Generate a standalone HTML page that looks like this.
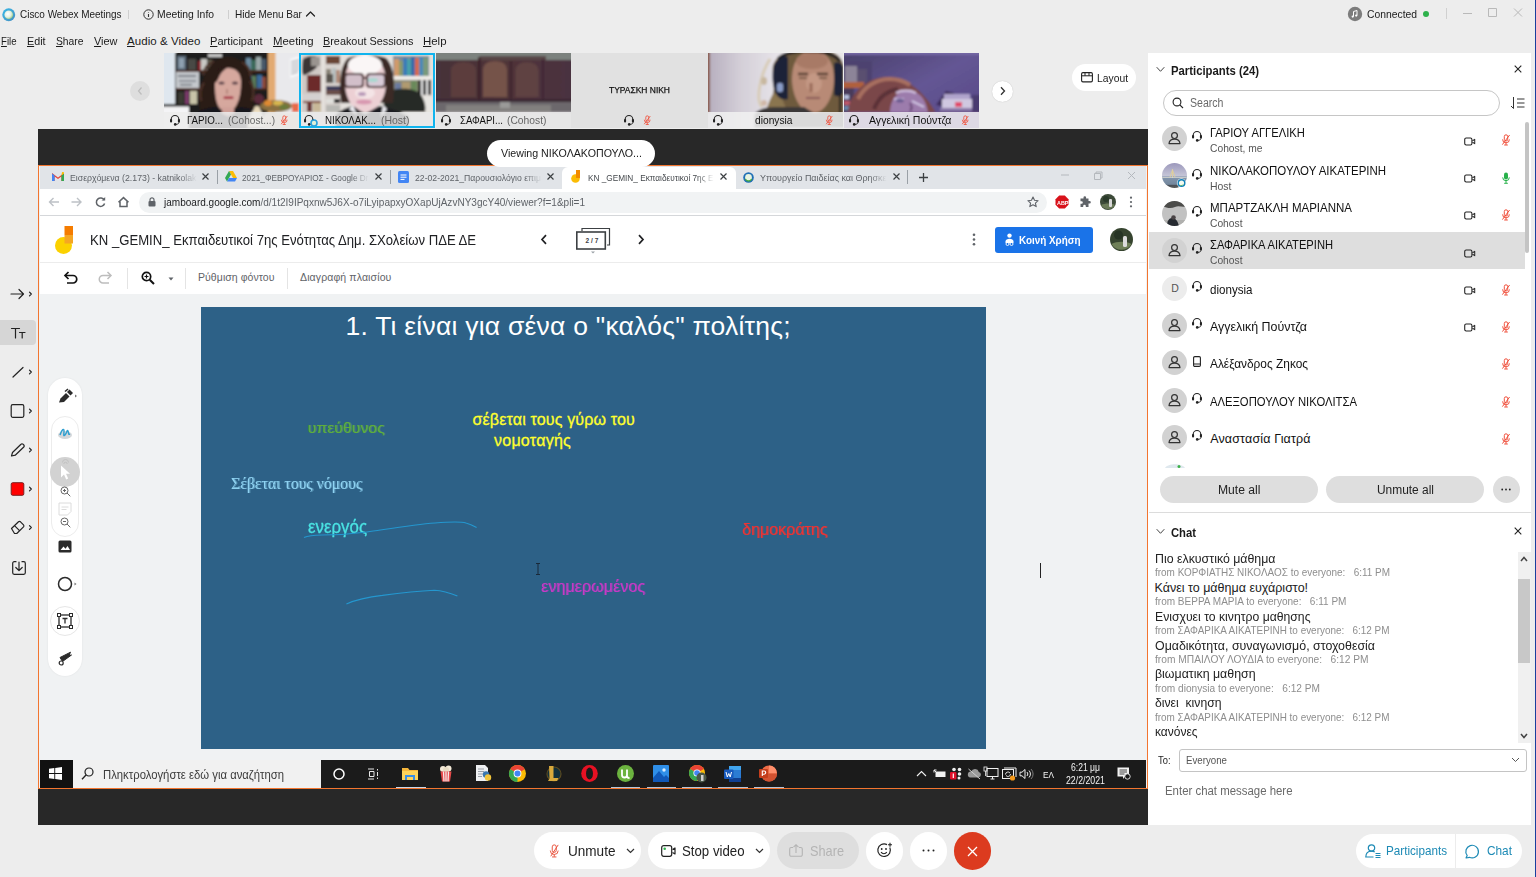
<!DOCTYPE html>
<html lang="el"><head>
<meta charset="utf-8">
<title>Cisco Webex Meetings</title>
<style>
*{box-sizing:border-box;margin:0;padding:0}
html,body{width:1536px;height:877px;overflow:hidden}
body{background:#ededed;font-family:"Liberation Sans",sans-serif;color:#222;font-size:12px}
.a{position:absolute;white-space:nowrap}
.t{position:absolute;white-space:pre;line-height:1;color:#1b1b1b}
svg{position:absolute;overflow:visible}
.ic{fill:none;stroke:#222;stroke-width:1.2;stroke-linecap:round;stroke-linejoin:round}
u{text-decoration-thickness:1px}
.g{color:#666}
.vid{position:absolute;top:53px;height:75px;overflow:hidden}
.vid svg{left:0;top:0}
.lab{position:absolute;left:0;right:0;top:59px;height:16px;background:rgba(236,236,236,.86)}
.sep{position:absolute;width:1px;background:#cfcfcf}
</style>
</head>
<body>

<!-- ================= TITLE BAR ================= -->
<div id="titlebar">
  <svg style="left:2px;top:7.500px" width="13.500" height="13.500" viewBox="0 0 14.600 14.600"><defs><linearGradient id="wx" x1="0" y1="0" x2="1" y2="1"><stop offset="0" stop-color="#35b8e8"></stop><stop offset="1" stop-color="#4a8fc0"></stop></linearGradient><radialGradient id="wx2" cx=".4" cy=".4" r=".7"><stop offset="0" stop-color="#fff"></stop><stop offset=".55" stop-color="#e4efe0"></stop><stop offset="1" stop-color="#7fc26a"></stop></radialGradient></defs><circle cx="7.3" cy="7.3" r="7" fill="url(#wx)"></circle><circle cx="7.3" cy="7.3" r="4.7" fill="url(#wx2)"></circle></svg>
  <span class="t" style="font-size: 11.5px; left: 20px; top: 9px; transform-origin: 0px 50%; transform: scaleX(0.865);">Cisco Webex Meetings</span>
  <div class="sep" style="left:128px;top:10px;height:9px"></div>
  <svg style="left:143px;top:9px" width="11" height="11" viewBox="0 0 11 11"><circle cx="5.5" cy="5.5" r="4.7" fill="none" stroke="#333" stroke-width="1"></circle><path d="M5.5 5v3M5.5 3v.6" stroke="#333" stroke-width="1.1" fill="none"></path></svg>
  <span class="t" style="font-size: 11.5px; left: 157px; top: 9px; transform-origin: 0px 50%; transform: scaleX(0.901);">Meeting Info</span>
  <div class="sep" style="left:228px;top:10px;height:9px"></div>
  <span class="t" style="font-size: 11.5px; left: 235px; top: 9px; transform-origin: 0px 50%; transform: scaleX(0.873);">Hide Menu Bar</span>
  <svg style="left:305px;top:10px" width="11" height="8" viewBox="0 0 11 8"><path class="ic" d="M1.5 6 5.5 2l4 4" stroke-width="1.1"></path></svg>

  <svg style="left:1347px;top:6px" width="16" height="16" viewBox="0 0 16 16"><circle cx="8" cy="8" r="7.2" fill="#7d7d7d"></circle><path d="M6.5 10.5V5.5l3.5-1v5" fill="none" stroke="#fff" stroke-width="1"></path><circle cx="5.7" cy="10.6" r="1.1" fill="#fff"></circle><circle cx="9.2" cy="9.6" r="1.1" fill="#fff"></circle></svg>
  <span class="t" style="font-size: 11.5px; left: 1367px; top: 9px; transform-origin: 0px 50%; transform: scaleX(0.899);">Connected</span>
  <div class="a" style="left:1423px;top:11px;width:6px;height:6px;border-radius:50%;background:#2fb24c"></div>
  <div class="sep" style="left:1446px;top:8px;height:11px;background:#d0d0d0"></div>
  <svg style="left:1462px;top:7px" width="66" height="14" viewBox="0 0 66 14"><path d="M1 6.5h9M26.5 1.5h8v8h-8zM52 1.5l8 8M60 1.5l-8 8" fill="none" stroke="#b9b9b9" stroke-width="1"></path></svg>
</div>

<!-- ================= MENU BAR ================= -->
<div id="menubar">
  <span class="t" style="font-size: 11.5px; left: 1px; top: 35.5px; transform-origin: 0px 50%; transform: scaleX(0.836);"><u>F</u>ile</span>
  <span class="t" style="font-size: 11.5px; left: 27px; top: 35.5px; transform-origin: 0px 50%; transform: scaleX(0.933);"><u>E</u>dit</span>
  <span class="t" style="font-size: 11.5px; left: 56px; top: 35.5px; transform-origin: 0px 50%; transform: scaleX(0.896);"><u>S</u>hare</span>
  <span class="t" style="font-size: 11.5px; left: 94px; top: 35.5px; transform-origin: 0px 50%; transform: scaleX(0.95);"><u>V</u>iew</span>
  <span class="t" style="font-size: 11.5px; letter-spacing: 0.06px; left: 127px; top: 35.5px;"><u>A</u>udio &amp; Video</span>
  <span class="t" style="font-size: 11.5px; left: 210px; top: 35.5px; transform-origin: 0px 50%; transform: scaleX(0.966);"><u>P</u>articipant</span>
  <span class="t" style="font-size: 11.5px; left: 273px; top: 35.5px; transform-origin: 0px 50%; transform: scaleX(0.989);"><u>M</u>eeting</span>
  <span class="t" style="font-size: 11.5px; left: 323px; top: 35.5px; transform-origin: 0px 50%; transform: scaleX(0.944);"><u>B</u>reakout Sessions</span>
  <span class="t" style="font-size: 11.5px; left: 423px; top: 35.5px; transform-origin: 0px 50%; transform: scaleX(0.993);"><u>H</u>elp</span>
</div>

<!-- ================= VIDEO STRIP ================= -->
<div id="strip">
  <svg width="0" height="0" style="left:0;top:0"><defs>
    <filter id="b1" x="-10%" y="-10%" width="120%" height="120%"><feGaussianBlur stdDeviation="1"></feGaussianBlur></filter>
    <filter id="b2" x="-20%" y="-20%" width="140%" height="140%"><feGaussianBlur stdDeviation="1.6"></feGaussianBlur></filter>
    <symbol id="hs" viewBox="0 0 12 12"><path d="M2.200 6.600V5.300a3.800 3.800 0 0 1 7.600 0v1.300" fill="none" stroke="#222" stroke-width="1.100"></path><rect x="1" y="5" width="2.100" height="3.600" rx="1" fill="#222"></rect><rect x="8.900" y="5" width="2.100" height="3.600" rx="1" fill="#222"></rect><path d="M10 8.200c0 1.400-1.200 2.100-3 2.200" fill="none" stroke="#222" stroke-width=".900"></path><circle cx="6.200" cy="10.400" r="1.300" fill="#222"></circle></symbol>
    <symbol id="mm" viewBox="0 0 10 12"><rect x="3.3" y=".8" width="3.4" height="6.2" rx="1.7" fill="none" stroke="#f0503c" stroke-width="1"></rect><path d="M1.6 5.4a3.4 3.4 0 0 0 6.8 0M5 8.9v2M3.2 11h3.6M8.6 1 1.4 10.6" fill="none" stroke="#f0503c" stroke-width="1"></path></symbol>
    <symbol id="cam" viewBox="0 0 13 10"><rect x=".8" y="1.2" width="8" height="7.6" rx="1.6" fill="none" stroke="#222" stroke-width="1.2"></rect><path d="M9.4 4.2 12 2.6v4.8L9.4 5.8" fill="none" stroke="#222" stroke-width="1.2" stroke-linejoin="round"></path></symbol>
    <symbol id="usr" viewBox="0 0 25 25"><circle cx="12.5" cy="12.5" r="12.5" fill="#d2d2d2"></circle><circle cx="12.5" cy="9.6" r="2.9" fill="none" stroke="#333" stroke-width="1.2"></circle><path d="M7 17.6c.3-3 2-4.4 5.500-4.400s5.200 1.400 5.500 4.400z" fill="none" stroke="#333" stroke-width="1.200" stroke-linejoin="round"></path></symbol>
  </defs></svg>

  <!-- prev / next -->
  <div class="a" style="left:130px;top:81px;width:20px;height:20px;border-radius:50%;background:#dedede"></div>
  <svg style="left:136px;top:86px" width="8" height="10" viewBox="0 0 8 10"><path d="M5.500 1.500 2.500 5l3 3.500" fill="none" stroke="#bdbdbd" stroke-width="1.200"></path></svg>
  <div class="a" style="left:991.500px;top:80.500px;width:21px;height:21px;border-radius:50%;background:#fff;box-shadow:0 0 1px rgba(0,0,0,.25)"></div>
  <svg style="left:998.500px;top:86px" width="8" height="10" viewBox="0 0 8 10"><path d="M2 1.200 5.500 5 2 8.800" fill="none" stroke="#333" stroke-width="1.300"></path></svg>

  <!-- v1 -->
  <div class="vid" style="left:164px;width:135px;background:#2a2424">
    <svg width="135" height="75" viewBox="0 0 135 75"><g filter="url(#b1)">
      <rect x="-2" y="-2" width="14" height="79" fill="#dfe7ef"></rect>
      <rect x="11" y="0" width="94" height="60" fill="#1d1b1c"></rect>
      <rect x="13" y="3" width="9" height="14" fill="#5c6a78"></rect><rect x="15" y="5" width="5" height="10" fill="#8fa0b0"></rect>
      <rect x="24" y="6" width="8" height="11" fill="#4a4a44"></rect><rect x="34" y="8" width="3" height="9" fill="#8a2a30"></rect><rect x="37" y="6" width="6" height="11" fill="#c8c8c4"></rect><rect x="44" y="7" width="4" height="10" fill="#6a6a5a"></rect>
      <rect x="44" y="1" width="14" height="3" fill="#c8c8c8"></rect>
      <rect x="82" y="5" width="5" height="12" fill="#6a8aa0"></rect><rect x="87" y="7" width="5" height="10" fill="#3a6a5a"></rect><rect x="92" y="4" width="5" height="13" fill="#9aa8a8"></rect><rect x="97" y="6" width="5" height="11" fill="#4a5a6a"></rect>
      <rect x="12" y="17.500" width="92" height="1.500" fill="#5a2e20"></rect><rect x="12" y="35" width="92" height="1.500" fill="#5a2e20"></rect>
      <rect x="12" y="19" width="23" height="16" fill="#c4c8cc"></rect><rect x="14" y="22" width="18" height="2" fill="#7a8088"></rect><rect x="15" y="27" width="17" height="2" fill="#8a9098"></rect><rect x="16" y="31" width="12" height="1.500" fill="#6a7078"></rect>
      <rect x="84" y="21" width="4" height="14" fill="#3a5a7a"></rect><rect x="88" y="23" width="4" height="12" fill="#5a7a5a"></rect><rect x="93" y="22" width="5" height="13" fill="#3a6a9a"></rect><rect x="98" y="24" width="4" height="11" fill="#8a4a3a"></rect>
      <rect x="14" y="39" width="6" height="12" fill="#3a3a30"></rect><rect x="21" y="38" width="4" height="13" fill="#7a3a6a"></rect><rect x="26" y="38" width="7" height="13" fill="#c8c4a8"></rect>
      <ellipse cx="95" cy="46" rx="5" ry="5" fill="#5a2a3a"></ellipse>
      <rect x="104" y="-2" width="8" height="62" fill="#e2aa72"></rect>
      <rect x="111.500" y="-2" width="26" height="79" fill="#e9e9ec"></rect>
      <path d="M126 6l9-3v19l-9 3z" fill="#f8f8fa"></path><path d="M127 9l8-2M127 12l8-2M127 15l8-2M127 18l8-2M127 21l7-2" stroke="#8a8e98" stroke-width="1"></path>
      <rect x="-2" y="51" width="26" height="3" fill="#202020"></rect><rect x="-2" y="53.500" width="27" height="24" fill="#f4f4f6"></rect>
      <path d="M36 58c-2-10 0-24 4-34 4-12 12-20 24-20s20 8 23 20c3 10 4 22 2 34z" fill="#2a1a18"></path>
      <path d="M40 30c-4 4-5 12-3 18M86 28c4 6 4 14 2 20M50 8c-6 2-10 8-11 14M78 9c5 3 8 8 9 14" stroke="#4a3028" stroke-width="2.500" fill="none"></path>
      <path d="M51 30c0-10 5-15 13-15s13 5 13 14c0 8-1 16-4 22s-6 8-10 8-8-3-10-9-2-12-2-20z" fill="#d6a89e"></path>
      <path d="M50 30c0-12 6-18 16-18-4 4-8 6-10 10s-3 8-6 8z" fill="#2a1a18"></path>
      <ellipse cx="57.500" cy="30" rx="3" ry="1.500" fill="#5a4048"></ellipse><ellipse cx="71" cy="30" rx="3" ry="1.500" fill="#5a4048"></ellipse>
      <path d="M63 36v5" stroke="#b8887e" stroke-width="2"></path>
      <rect x="59.500" y="43.500" width="10" height="2.500" rx="1.200" fill="#a62a40"></rect>
      <path d="M30 75V62c6-6 16-8 22-8l12 6 12-6c8 0 16 3 22 8v13z" fill="#14141c"></path>
      <path d="M58 54h12v6l-6 3-6-3z" fill="#d0a098"></path>
      <ellipse cx="112" cy="53" rx="16" ry="6" fill="#8a7040"></ellipse><ellipse cx="104" cy="50" rx="4" ry="3" fill="#e08a30"></ellipse><ellipse cx="114" cy="50" rx="5" ry="2.500" fill="#d8b850"></ellipse><ellipse cx="120" cy="54" rx="5" ry="3" fill="#6a7a3a"></ellipse><rect x="128" y="50" width="7" height="9" fill="#e86a4a"></rect>
      <path d="M84 75c0-10 4-18 8-20s8 6 10 20z" fill="#f0e6d0"></path><ellipse cx="93" cy="56" rx="3" ry="3" fill="#e8d8b8"></ellipse>
      <rect x="100" y="60" width="37" height="17" fill="#dcc8b0"></rect>
    </g></svg>
    <div class="lab"></div>
  </div>

  <!-- v2 (active speaker) -->
  <div class="vid" style="left:299px;width:136.300px;background:#d8d4d0">
    <svg width="137" height="75" viewBox="0 0 137 75"><g filter="url(#b1)">
      <rect x="-2" y="-2" width="141" height="79" fill="#e4e0dc"></rect>
      <rect x="3" y="2" width="19" height="57" fill="#cfc8c4"></rect><rect x="26" y="2" width="16" height="57" fill="#d8d2ce"></rect>
      <path d="M4 6c4-3 10-4 14-2v10c-4 4-8 6-12 8s-3-10-2-16z" fill="#3a3434"></path><rect x="12" y="4" width="9" height="9" fill="#9a9490"></rect>
      <rect x="8" y="22" width="14" height="17" fill="#6c2a2c"></rect><rect x="3" y="41" width="19" height="6" fill="#d4d0d0"></rect><rect x="4" y="48" width="18" height="2" fill="#7a4030"></rect><rect x="8" y="50" width="5" height="9" fill="#6a3030"></rect><rect x="14" y="50" width="8" height="9" fill="#c8b898"></rect>
      <rect x="27" y="3" width="14" height="8" fill="#6a4434"></rect><rect x="27" y="16" width="5" height="14" fill="#8a8478"></rect><rect x="33" y="15" width="4" height="15" fill="#b8c0c0"></rect><rect x="37" y="17" width="4" height="13" fill="#b08a78"></rect><rect x="27" y="21" width="7" height="9" fill="#5a5450"></rect>
      <rect x="27" y="33" width="14" height="4" fill="#3a3a5a"></rect><rect x="27" y="37" width="14" height="5" fill="#6a5048"></rect><rect x="27" y="46" width="8" height="4" fill="#e0e0dc"></rect><rect x="35" y="46" width="6" height="4" fill="#202020"></rect><rect x="27" y="52" width="14" height="7" fill="#b8b8b4"></rect>
      <rect x="94" y="3" width="36" height="20" fill="#7a8a98"></rect>
      <rect x="95" y="6" width="5" height="17" fill="#d09a6a"></rect><rect x="100" y="8" width="4" height="15" fill="#8a9a6a"></rect><rect x="104" y="5" width="4" height="18" fill="#3a7ab8"></rect><rect x="108" y="6" width="4" height="17" fill="#48a0a8"></rect><rect x="112" y="4" width="4" height="19" fill="#3a6aa8"></rect><rect x="116" y="5" width="4" height="18" fill="#d86a4a"></rect><rect x="120" y="4" width="4" height="19" fill="#4a88b8"></rect><rect x="124" y="5" width="5" height="18" fill="#7a9a7a"></rect>
      <rect x="92" y="23" width="41" height="3" fill="#f0ece8"></rect>
      <rect x="95" y="27" width="36" height="15" fill="#8a8a78"></rect><rect x="96" y="30" width="6" height="12" fill="#6a7aa0"></rect><rect x="103" y="29" width="8" height="13" fill="#b09a70"></rect><rect x="112" y="28" width="6" height="14" fill="#6a8a5a"></rect><rect x="119" y="27" width="3" height="15" fill="#181818"></rect><rect x="122" y="27" width="2" height="15" fill="#e8e8e8"></rect><rect x="124" y="27" width="3" height="15" fill="#181818"></rect><rect x="127" y="27" width="2" height="15" fill="#e8e8e8"></rect><rect x="129" y="27" width="3" height="15" fill="#202020"></rect>
      <rect x="120" y="44" width="14" height="15" fill="#e8e6e2"></rect>
      <path d="M84 59c0-14 4-22 14-23s20 0 24 6 5 12 4 17z" fill="#262a26"></path>
      <path d="M42 50c-2-16-2-34 6-44 6-5 34-5 40 0 8 10 8 28 6 44z" fill="#3a2a28"></path>
      <path d="M46 30c0-18 8-28 20-28s21 10 21 28c0 14-8 29-21 29s-20-15-20-29z" fill="#ecd0d4"></path>
      <ellipse cx="66" cy="12" rx="17" ry="10" fill="#faf6f6"></ellipse>
      <ellipse cx="66" cy="40" rx="10" ry="6" fill="#f4e4e6"></ellipse>
      <rect x="46" y="21" width="18" height="13" rx="3" fill="#c8b8c4" fill-opacity=".7" stroke="#4a3030" stroke-width="2"></rect><rect x="68" y="21" width="18" height="13" rx="3" fill="#d0c8d8" fill-opacity=".7" stroke="#4a3030" stroke-width="2"></rect><path d="M64 25h4" stroke="#4a3030" stroke-width="2"></path>
      <ellipse cx="74" cy="27" rx="5" ry="2" fill="#a8d8d0"></ellipse>
      <ellipse cx="63" cy="41" rx="4" ry="2" fill="#b898b8"></ellipse>
      <ellipse cx="65" cy="49" rx="8" ry="2.500" fill="#d898b0"></ellipse>
      <path d="M36 75V62c6-5 12-8 18-9l12 8 14-8c10 2 22 6 30 10v12z" fill="#1c1c22"></path>
      <path d="M50 56l4-4 4 10zM84 52l4 4-6 8z" fill="#f0f0f4"></path>
    </g></svg>
    <div class="lab" style="left:2px;right:2px;height:14px;top:59px;background:rgba(234,234,234,.84)"></div>
    <div class="a" style="left:0;top:0;width:136.300px;height:75px;border:2.500px solid #10b4ee"></div>
  </div>

  <!-- v3 -->
  <div class="vid" style="left:436px;width:135px;background:#4a3238">
    <svg width="135" height="75" viewBox="0 0 135 75"><defs><linearGradient id="g3" x1="0" y1="0" x2="1" y2="0"><stop offset="0" stop-color="#45303a"></stop><stop offset=".5" stop-color="#503438"></stop><stop offset="1" stop-color="#4a3040"></stop></linearGradient></defs><g filter="url(#b1)">
      <rect x="-2" y="-2" width="139" height="79" fill="url(#g3)"></rect>
      <rect x="-2" y="-2" width="139" height="9" fill="#7c827e"></rect><rect x="44" y="3" width="66" height="4" fill="#5a4a48"></rect>
      <path d="M15 44V18c0-6 5-9 12.500-9s12.500 3 12.500 9v26z" fill="#5c3e3c"></path>
      <path d="M47 44V17c0-6 5-9 12-9s12 3 12 9v27z" fill="#745248"></path>
      <path d="M79.500 44V18c0-6 5-9 11.500-9s11.500 3 11.500 9v26z" fill="#5e4242"></path>
      <rect x="42" y="4" width="2.500" height="55" fill="#3a2428"></rect><rect x="74" y="8" width="2" height="40" fill="#3e282c"></rect><rect x="106" y="6" width="2" height="42" fill="#3e2830"></rect>
      <rect x="-2" y="46" width="139" height="3" fill="#3a2830"></rect>
      <rect x="-2" y="49" width="139" height="28" fill="#6c686c"></rect><rect x="10" y="52" width="105" height="8" fill="#82807e"></rect><rect x="64" y="49" width="10" height="6" fill="#9a9a98"></rect>
      <rect x="-2" y="59" width="139" height="18" fill="#b8b4b8"></rect>
    </g></svg>
    <div class="lab" style="background:rgba(238,238,238,.86)"></div>
  </div>

  <!-- v4 (no video) -->
  <div class="vid" style="left:571px;width:137px;background:#e1e1e1"></div>

  <!-- v5 -->
  <div class="vid" style="left:708px;width:135px;background:#d0c9d2">
    <svg width="135" height="75" viewBox="0 0 135 75"><defs><linearGradient id="g5" x1="0" y1="0" x2="1" y2="0"><stop offset="0" stop-color="#b4acbc"></stop><stop offset=".25" stop-color="#d4cfd8"></stop><stop offset=".5" stop-color="#e6e3e8"></stop><stop offset="1" stop-color="#e8e6e8"></stop></linearGradient></defs><g filter="url(#b1)">
      <rect x="-2" y="-2" width="139" height="79" fill="url(#g5)"></rect>
      <rect x="-2" y="-2" width="4" height="62" fill="#8a5a48"></rect>
      <path d="M62 6c-4 6-8 16-10 26s-2 18 2 22" stroke="#d8ccb8" stroke-width="3" fill="none"></path><ellipse cx="56" cy="28" rx="3" ry="4" fill="#c8b8a0"></ellipse><ellipse cx="56" cy="50" rx="3" ry="3" fill="#d0b8a8"></ellipse>
      <path d="M66 10c6-12 22-14 40-14s28 6 30 18v46H56c6-8 10-18 10-28s-3-16 0-22z" fill="#6e5a3c"></path>
      <path d="M58 60c2-12 8-22 12-24l10 24z" fill="#8a7450"></path>
      <path d="M84 26c0-18 8-28 21-28s21 10 21 28c0 16-8 34-21 34S84 42 84 26z" fill="#b88a76"></path>
      <ellipse cx="104" cy="8" rx="16" ry="8" fill="#a87a66"></ellipse><ellipse cx="106" cy="30" rx="8" ry="10" fill="#c49884"></ellipse>
      <path d="M66 12c4-8 10-10 14-8v42c-6 2-12-2-14-10s-2-18 0-24z" fill="#1c2238"></path><rect x="69" y="30" width="6" height="9" rx="2" fill="#8a9cc8"></rect>
      <path d="M126 10c4-2 8 0 9 4v26c-2 4-6 4-9 2z" fill="#1c2238"></path>
      <path d="M70 6c8-10 50-12 62 2" stroke="#1c1c24" stroke-width="3" fill="none"></path>
      <path d="M90 21h10M109 21h11" stroke="#5a4034" stroke-width="2.500"></path><path d="M91 25h8M111 25h8" stroke="#6a5040" stroke-width="1.500"></path>
      <path d="M103 30v9" stroke="#9a6a58" stroke-width="3"></path>
      <path d="M98 45h14" stroke="#8a5858" stroke-width="2"></path>
      <path d="M46 75V62c4-6 12-8 20-8h30l10 6h31v15z" fill="#3a3838"></path>
      <path d="M132 40v20" stroke="#1c1c24" stroke-width="2"></path>
    </g></svg>
    <div class="lab" style="background:rgba(240,240,240,.88)"></div>
  </div>

  <!-- v6 -->
  <div class="vid" style="left:844px;width:135px;background:#5d4a8e">
    <svg width="135" height="75" viewBox="0 0 135 75"><defs><linearGradient id="g6" x1="0" y1="0" x2="1" y2="1"><stop offset="0" stop-color="#48406a"></stop><stop offset=".5" stop-color="#645694"></stop><stop offset="1" stop-color="#544684"></stop></linearGradient></defs><g filter="url(#b1)">
      <rect x="-2" y="-2" width="139" height="79" fill="url(#g6)"></rect>
      <rect x="-2" y="-2" width="139" height="4" fill="#7468a4"></rect>
      <rect x="-2" y="8" width="30" height="22" fill="#4e4270"></rect>
      <rect x="1" y="13" width="12" height="16" fill="#8c8498"></rect><rect x="13" y="16" width="10" height="13" fill="#5a5070"></rect>
      <rect x="-2" y="29" width="22" height="6" fill="#b0603c"></rect>
      <rect x="-2" y="35" width="12" height="25" fill="#4a3a5a"></rect><rect x="0" y="42" width="5" height="4" fill="#b8c0e0"></rect><rect x="0" y="48" width="6" height="4" fill="#c05a6a"></rect><rect x="0" y="53" width="6" height="4" fill="#6a8ab0"></rect>
      <path d="M4 60c0-12 8-26 24-33 12-5 28-4 38 4 12 8 20 18 26 29z" fill="#7a4648"></path>
      <path d="M14 46c6-12 18-20 32-20 8 0 14 2 20 6" stroke="#a87060" stroke-width="4" fill="none"></path>
      <path d="M30 56c4-10 12-18 24-20" stroke="#5a3038" stroke-width="4" fill="none"></path>
      <path d="M46 60c0-12 6-22 18-22s18 8 20 22z" fill="#9c7cac"></path>
      <path d="M52 40c6-3 14-3 20 0" stroke="#d0c0e0" stroke-width="2.500" fill="none"></path>
      <path d="M50 46h10M68 48l12 6" stroke="#d8d0ec" stroke-width="1.500"></path><ellipse cx="56" cy="47.500" rx="4" ry="2" fill="#6a5a90"></ellipse>
      <path d="M66 50c2 3 2 6 0 8" stroke="#6a4a78" stroke-width="2" fill="none"></path>
      <path d="M92 52l10-14 8 2-6 14z" fill="#3a2a58"></path>
      <rect x="100" y="41" width="26" height="5" fill="#b0a4cc"></rect><rect x="98" y="46" width="30" height="10" fill="#d0c8e0"></rect><rect x="111" y="49" width="7" height="5" fill="#e0486a"></rect><rect x="96" y="55" width="34" height="3" fill="#8a78a8"></rect>
      <rect x="128" y="42" width="9" height="18" fill="#4a3a70"></rect>
      <rect x="-2" y="59" width="139" height="18" fill="#74588a"></rect>
    </g></svg>
    <div class="lab" style="background:rgba(236,234,240,.88)"></div>
  </div>

  <!-- labels -->
  <svg style="left:169.3px;top:113.800px" width="12" height="12"><use href="#hs"></use></svg>
  <span class="t" style="color: rgb(17, 17, 17); font-size: 11px; left: 187px; top: 115px; transform-origin: 0px 50%; transform: scaleX(0.889);">ΓΑΡΙΟ...</span>
  <span class="t g" style="font-size: 11px; left: 228px; top: 115px; transform-origin: 0px 50%; transform: scaleX(0.915);">(Cohost...)</span>
  <svg style="left:279.5px;top:115px" width="8.500" height="10.500"><use href="#mm"></use></svg>

  <svg style="left:303.3px;top:113.800px" width="12" height="12"><use href="#hs"></use></svg>
  <svg style="left:310px;top:119px" width="8" height="8" viewBox="0 0 8 8"><circle cx="4" cy="4" r="3.800" fill="#2aa0dc"></circle><circle cx="4" cy="4" r="2.200" fill="#dff0d8"></circle></svg>
  <span class="t" style="color: rgb(17, 17, 17); font-size: 11px; left: 325px; top: 115px; transform-origin: 0px 50%; transform: scaleX(0.886);">ΝΙΚΟΛΑΚ...</span>
  <span class="t g" style="font-size: 11px; left: 381px; top: 115px; transform-origin: 0px 50%; transform: scaleX(0.951);">(Host)</span>

  <svg style="left:440.3px;top:113.800px" width="12" height="12"><use href="#hs"></use></svg>
  <span class="t" style="color: rgb(17, 17, 17); font-size: 11px; left: 460px; top: 115px; transform-origin: 0px 50%; transform: scaleX(0.874);">ΣΑΦΑΡΙ...</span>
  <span class="t g" style="font-size: 11px; left: 507px; top: 115px; transform-origin: 0px 50%; transform: scaleX(0.936);">(Cohost)</span>

  <span class="t" style="color: rgb(17, 17, 17); -webkit-text-stroke: 0.25px rgb(17, 17, 17); font-size: 9.5px; left: 608.5px; top: 85.3px; transform-origin: 0px 50%; transform: scaleX(0.89);">ΤΥΡΑΣΚΗ ΝΙΚΗ</span>
  <svg style="left:623.3px;top:113.800px" width="12" height="12"><use href="#hs"></use></svg>
  <svg style="left:642.5px;top:115px" width="8.500" height="10.500"><use href="#mm"></use></svg>

  <svg style="left:712.3px;top:113.800px" width="12" height="12"><use href="#hs"></use></svg>
  <span class="t" style="color: rgb(17, 17, 17); font-size: 11px; left: 755px; top: 115px; transform-origin: 0px 50%; transform: scaleX(0.929);">dionysia</span>
  <svg style="left:824.5px;top:115px" width="8.500" height="10.500"><use href="#mm"></use></svg>

  <svg style="left:848.3px;top:113.800px" width="12" height="12"><use href="#hs"></use></svg>
  <span class="t" style="color: rgb(17, 17, 17); font-size: 11px; left: 869px; top: 115px; transform-origin: 0px 50%; transform: scaleX(0.96);">Αγγελική Πούντζα</span>
  <svg style="left:960.5px;top:115px" width="8.500" height="10.500"><use href="#mm"></use></svg>

  <!-- layout pill -->
  <div class="a" style="left:1072px;top:64px;width:64px;height:27px;border-radius:14px;background:#fff"></div>
  <svg style="left:1081px;top:72px" width="12" height="11" viewBox="0 0 12 11"><rect x=".600" y=".600" width="10.800" height="9.300" rx="1.300" fill="none" stroke="#222" stroke-width="1.100"></rect><path d="M.6 3.800h10.800M4 .8v3M8 .8v3" stroke="#222" stroke-width="1" fill="none"></path></svg>
  <span class="t" style="font-size: 11.5px; left: 1096.5px; top: 72.5px; transform-origin: 0px 50%; transform: scaleX(0.898);">Layout</span>
</div>

<!-- ================= SHARED SCREEN ================= -->
<style>
#stage{position:absolute;left:38px;top:129px;width:1109.500px;height:696px;background:#282828}
#share{position:absolute;left:38px;top:164.5px;width:1109.5px;height:624.5px;background:#f0f2f3;border:1.5px solid #f2752f;overflow:hidden}
.tabt{color:#5f6368}
.ci{fill:none;stroke:#5f6368;stroke-width:1.400}
</style>
<div id="stage"></div>
<div id="share"></div>

<div id="chrome">
  <!-- tab strip -->
  <div class="a" style="left:40px;top:166px;width:1106px;height:23px;background:#e1e4e8"></div>
  <div class="a" style="left:562px;top:167px;width:174px;height:22px;background:#fff;border-radius:6px 6px 0 0"></div>
  <!-- tab 1 gmail -->
  <svg style="left:52px;top:172px" width="12" height="9" viewBox="0 0 12 9"><path d="M0 9V1l6 4.500L12 1v8h-2.600V4.500L6 7 2.600 4.500V9z" fill="#ea4335"></path><path d="M0 1.500V9h2.600V3.500z" fill="#4285f4"></path><path d="M12 1.500V9H9.400V3.500z" fill="#34a853"></path><path d="M9.400 3.500 12 1.500V1c0-1-1.200-1.300-2-.7z" fill="#fbbc04"></path></svg>
  <span class="t tabt" style="font-size: 9.5px; left: 70px; top: 173px; transform-origin: 0px 50%; transform: scaleX(0.921);">Εισερχόμενα (2.173) - katnikolak</span>
  <svg style="left:202px;top:173px" width="7" height="7" viewBox="0 0 7 7"><path d="M.5.500l6 6M6.500.500l-6 6" stroke="#3c4043" stroke-width="1.200"></path></svg>
  <div class="sep" style="left:217px;top:170px;height:14px;background:#9aa0a6"></div>
  <!-- tab 2 drive -->
  <svg style="left:225px;top:171px" width="12" height="11" viewBox="0 0 12 11"><path d="M4 0h4l4 7H8z" fill="#fbbc04"></path><path d="M4 0 0 7l2 3.500L6 3.500z" fill="#34a853"></path><path d="M2 10.500h8L12 7H4z" fill="#4285f4"></path></svg>
  <span class="t tabt" style="font-size: 9.5px; left: 242px; top: 173px; transform-origin: 0px 50%; transform: scaleX(0.866);">2021_ΦΕΒΡΟΥΑΡΙΟΣ - Google Dr</span>
  <svg style="left:375px;top:173px" width="7" height="7" viewBox="0 0 7 7"><path d="M.5.500l6 6M6.500.500l-6 6" stroke="#3c4043" stroke-width="1.200"></path></svg>
  <div class="sep" style="left:390px;top:170px;height:14px;background:#9aa0a6"></div>
  <!-- tab 3 docs -->
  <svg style="left:398px;top:171px" width="11" height="12" viewBox="0 0 11 12"><rect width="11" height="12" rx="1.500" fill="#4285f4"></rect><path d="M2.500 4h6M2.500 6.200h6M2.500 8.400h4" stroke="#fff" stroke-width="1"></path></svg>
  <span class="t tabt" style="font-size: 9.5px; left: 415px; top: 173px; transform-origin: 0px 50%; transform: scaleX(0.911);">22-02-2021_Παρουσιολόγιο επιμ</span>
  <svg style="left:547px;top:173px" width="7" height="7" viewBox="0 0 7 7"><path d="M.5.500l6 6M6.500.500l-6 6" stroke="#3c4043" stroke-width="1.200"></path></svg>
  <!-- tab 4 jamboard -->
  <svg style="left:571px;top:170px" width="10" height="13" viewBox="0 0 10 13"><circle cx="4.500" cy="8.500" r="4.300" fill="#fbbc04"></circle><rect x="5" y="0" width="4" height="8" fill="#f28b00"></rect></svg>
  <span class="t tabt" style="color: rgb(69, 73, 77); font-size: 9.5px; left: 588px; top: 173px; transform-origin: 0px 50%; transform: scaleX(0.867);">KN _GEMIN_ Εκπαιδευτικοί 7ης Ε</span>
  <svg style="left:720px;top:173px" width="7" height="7" viewBox="0 0 7 7"><path d="M.5.500l6 6M6.500.500l-6 6" stroke="#3c4043" stroke-width="1.200"></path></svg>
  <!-- tab 5 -->
  <svg style="left:743px;top:172px" width="11" height="11" viewBox="0 0 11 11"><circle cx="5.500" cy="5.500" r="5.300" fill="#1f6fb5"></circle><circle cx="5.500" cy="5.500" r="3.400" fill="#e8f4e0"></circle><path d="M2.300 7a3.600 3.600 0 0 0 6.400 0" fill="none" stroke="#45a845" stroke-width="1.400"></path></svg>
  <span class="t tabt" style="font-size: 9.5px; left: 760px; top: 173px; transform-origin: 0px 50%; transform: scaleX(0.942);">Υπουργείο Παιδείας και Θρησκε</span>
  <svg style="left:893px;top:173px" width="7" height="7" viewBox="0 0 7 7"><path d="M.5.500l6 6M6.500.500l-6 6" stroke="#3c4043" stroke-width="1.200"></path></svg>
  <div class="sep" style="left:907px;top:170px;height:14px;background:#9aa0a6"></div>
  <svg style="left:919px;top:173px" width="9" height="9" viewBox="0 0 9 9"><path d="M4.500 0v9M0 4.500h9" stroke="#3c4043" stroke-width="1.300"></path></svg>
  <svg style="left:1061px;top:171px" width="76" height="10" viewBox="0 0 76 10"><path d="M0 4h8M33.500 2.500h6v6h-6zM35 2.500V1h6v6h-1.500M67 1l7 7M74 1l-7 7" fill="none" stroke="#b4b8bd" stroke-width="1"></path></svg>

  <div class="a" style="left:180px;top:170px;width:17px;height:15px;background:linear-gradient(90deg,rgba(225,228,232,0),#e1e4e8)"></div>
  <div class="a" style="left:352px;top:170px;width:17px;height:15px;background:linear-gradient(90deg,rgba(225,228,232,0),#e1e4e8)"></div>
  <div class="a" style="left:525px;top:170px;width:17px;height:15px;background:linear-gradient(90deg,rgba(225,228,232,0),#e1e4e8)"></div>
  <div class="a" style="left:697px;top:170px;width:17px;height:15px;background:linear-gradient(90deg,rgba(255,255,255,0),#fff)"></div>
  <div class="a" style="left:870px;top:170px;width:17px;height:15px;background:linear-gradient(90deg,rgba(225,228,232,0),#e1e4e8)"></div>
  <!-- address row -->
  <div class="a" style="left:40px;top:189px;width:1106px;height:26px;background:#fff"></div>
  <div class="a" style="left:40px;top:215px;width:1106px;height:1px;background:#d5d7da"></div>
  <div class="a" style="left:139px;top:192px;width:908px;height:21px;border-radius:11px;background:#f1f3f4"></div>
  <svg style="left:48px;top:196px" width="82" height="12" viewBox="0 0 82 12"><path d="M11 6H1.500M5.500 2 1.500 6l4 4M23.500 6H33M29 2l4 4-4 4" fill="none" stroke="#bdc1c6" stroke-width="1.400"></path><path d="M56.300 4.200A4.200 4.200 0 1 0 56.600 7.500" fill="none" stroke="#5f6368" stroke-width="1.500"></path><path d="M57.200 1v3.600h-3.600z" fill="#5f6368"></path><path d="M70.500 6.200 75.500 1.600l5 4.600M72 5.500v5h7v-5" fill="none" stroke="#5f6368" stroke-width="1.500"></path></svg>
  <svg style="left:148px;top:197px" width="8" height="10" viewBox="0 0 8 10"><rect x=".500" y="4" width="7" height="5.500" rx="1" fill="#5f6368"></rect><path d="M2 4V2.800a2 2 0 0 1 4 0V4" fill="none" stroke="#5f6368" stroke-width="1.200"></path></svg>
  <span class="t" style="color: rgb(95, 99, 104); font-size: 11.5px; left: 164px; top: 197px; transform-origin: 0px 50%; transform: scaleX(0.872);"><span style="color:#202124">jamboard.google.com</span>/d/1t2I9IPqxnw5J6X-o7iLyipapxyOXapUjAzvNY3gcY40/viewer?f=1&amp;pli=1</span>
  <svg style="left:1027px;top:196px" width="12" height="12" viewBox="0 0 12 12"><path d="M6 1l1.500 3.300 3.600.400-2.700 2.400.800 3.500L6 8.800 2.800 10.600l.800-3.500L.900 4.700l3.600-.400z" fill="none" stroke="#5f6368" stroke-width="1.100" stroke-linejoin="round"></path></svg>
  <svg style="left:1055px;top:195px" width="14" height="14" viewBox="0 0 14 14"><path d="M4.200.500h5.600l3.700 3.700v5.600l-3.700 3.700H4.200L.5 9.800V4.200z" fill="#d8121b"></path></svg>
  <span class="t" style="color: rgb(255, 255, 255); font-weight: bold; font-size: 5.5px; left: 1056.5px; top: 200.5px; transform-origin: 0px 50%; transform: scaleX(0.989);">ABP</span>
  <svg style="left:1079px;top:196px" width="12" height="12" viewBox="0 0 12 12"><path d="M4.500 1.500a1.300 1.300 0 0 1 2.600 0V2.500h2.400v2.400h1a1.300 1.300 0 0 1 0 2.600h-1V11H6.800V10a1.300 1.300 0 0 0-2.600 0v1H1.500V7.800h1a1.300 1.300 0 0 0 0-2.600h-1V2.500h3z" fill="#5f6368"></path></svg>
  <svg style="left:1100px;top:194px" width="16" height="16" viewBox="0 0 16 16"><circle cx="8" cy="8" r="8" fill="#3c4a38"></circle><path d="M1 11a8 8 0 0 0 14 0c-3-2-10-2-14 0z" fill="#6a7a58"></path><rect x="9" y="5" width="3" height="8" rx="1" fill="#d8d8d8"></rect><circle cx="6" cy="5" r="3" fill="#2a3a2a"></circle></svg>
  <svg style="left:1129px;top:196px" width="4" height="12" viewBox="0 0 4 12"><circle cx="2" cy="1.700" r="1.100" fill="#5f6368"></circle><circle cx="2" cy="6" r="1.100" fill="#5f6368"></circle><circle cx="2" cy="10.300" r="1.100" fill="#5f6368"></circle></svg>

  <!-- jamboard header -->
  <div class="a" style="left:40px;top:216px;width:1106px;height:46px;background:#fff"></div>
  <div class="a" style="left:40px;top:262px;width:1106px;height:1px;background:#ececec"></div>
  <svg style="left:55px;top:226px" width="20" height="28" viewBox="0 0 20 28"><circle cx="8.500" cy="19.500" r="8.500" fill="#fbd100"></circle><rect x="9.500" y="0" width="8.500" height="9" fill="#f57c00"></rect><rect x="9.500" y="9" width="8.500" height="8.500" fill="#f5a623"></rect></svg>
  <span class="t" style="color: rgb(32, 33, 36); font-size: 14px; left: 90px; top: 233px; transform-origin: 0px 50%; transform: scaleX(0.938);">KN _GEMIN_ Εκπαιδευτικοί 7ης Ενότητας Δημ. ΣΧολείων ΠΔΕ ΔΕ</span>
  <svg style="left:540px;top:234px" width="8" height="11" viewBox="0 0 8 11"><path d="M6 1.200 2 5.500l4 4.300" fill="none" stroke="#202124" stroke-width="1.700"></path></svg>
  <svg style="left:575px;top:227px" width="36" height="28" viewBox="0 0 36 28"><path d="M7 4V1.500h27.500v16.500H32" fill="none" stroke="#3c4043" stroke-width="1.200"></path><rect x="1.800" y="5" width="28.500" height="17" fill="#fff" stroke="#3c4043" stroke-width="1.600"></rect><path d="M16 24.500h4l-2 2z" fill="#9aa0a6"></path></svg>
  <span class="t" style="color: rgb(60, 64, 67); font-weight: bold; font-size: 6.5px; letter-spacing: 0.07px; left: 585.5px; top: 238px;">2 / 7</span>
  <svg style="left:637px;top:234px" width="8" height="11" viewBox="0 0 8 11"><path d="M2 1.200 6 5.500 2 9.800" fill="none" stroke="#202124" stroke-width="1.700"></path></svg>
  <svg style="left:972px;top:233px" width="4" height="13" viewBox="0 0 4 13"><circle cx="2" cy="1.700" r="1.300" fill="#5f6368"></circle><circle cx="2" cy="6.500" r="1.300" fill="#5f6368"></circle><circle cx="2" cy="11.300" r="1.300" fill="#5f6368"></circle></svg>
  <div class="a" style="left:995px;top:227px;width:98px;height:26px;border-radius:3px;background:#1a73e8"></div>
  <svg style="left:1004px;top:233px" width="11" height="13" viewBox="0 0 11 13"><circle cx="5.500" cy="2.600" r="2.200" fill="#fff"></circle><path d="M1.500 10V8.500c0-2 2-2.800 4-2.800s4 .800 4 2.800V10z" fill="#fff"></path><circle cx="3.500" cy="11" r="1.500" fill="none" stroke="#fff" stroke-width=".9"></circle><circle cx="7.500" cy="11" r="1.500" fill="none" stroke="#fff" stroke-width=".9"></circle></svg>
  <span class="t" style="color: rgb(255, 255, 255); font-weight: bold; font-size: 11px; left: 1019px; top: 234.5px; transform-origin: 0px 50%; transform: scaleX(0.898);">Κοινή Χρήση</span>
  <svg style="left:1110px;top:228px" width="23" height="23" viewBox="0 0 23 23"><circle cx="11.500" cy="11.500" r="11.500" fill="#36442f"></circle><path d="M1.500 16a11.500 11.500 0 0 0 20 0c-5-3-15-3-20 0z" fill="#6f8058"></path><rect x="13" y="8" width="4" height="11" rx="1.500" fill="#dcdcdc"></rect><circle cx="8.500" cy="7" r="4.500" fill="#263424"></circle></svg>

  <!-- jamboard toolbar -->
  <div class="a" style="left:40px;top:263px;width:1106px;height:31px;background:#fff"></div>
  <svg style="left:64px;top:271px" width="14" height="14" viewBox="0 0 14 14"><path d="M4.500 1 1 4.500 4.500 8" fill="none" stroke="#111" stroke-width="1.700"></path><path d="M1.500 4.500H9a3.500 3.500 0 0 1 0 7.500H3" fill="none" stroke="#111" stroke-width="1.700"></path></svg>
  <svg style="left:98px;top:271px" width="14" height="14" viewBox="0 0 14 14"><path d="M9.500 1 13 4.500 9.500 8" fill="none" stroke="#bdbdbd" stroke-width="1.500"></path><path d="M12.500 4.500H5a3.500 3.500 0 0 0 0 7.500h6" fill="none" stroke="#bdbdbd" stroke-width="1.500"></path></svg>
  <div class="sep" style="left:127px;top:268px;height:21px;background:#e4e4e4"></div>
  <svg style="left:141px;top:271px" width="14" height="14" viewBox="0 0 14 14"><circle cx="5.500" cy="5.500" r="4.200" fill="none" stroke="#111" stroke-width="1.700"></circle><path d="M8.700 8.700 13 13" stroke="#111" stroke-width="2"></path><path d="M5.500 3.500v4M3.500 5.500h4" stroke="#111" stroke-width="1.200"></path></svg>
  <svg style="left:168px;top:277px" width="6" height="4" viewBox="0 0 6 4"><path d="M.5.500h5L3 3.500z" fill="#5f6368"></path></svg>
  <div class="sep" style="left:185px;top:268px;height:21px;background:#e4e4e4"></div>
  <span class="t" style="color: rgb(95, 99, 104); font-size: 10.5px; letter-spacing: 0.06px; left: 198px; top: 272px;">Ρύθμιση φόντου</span>
  <div class="sep" style="left:287px;top:268px;height:21px;background:#e4e4e4"></div>
  <span class="t" style="color: rgb(95, 99, 104); font-size: 10.5px; letter-spacing: 0.12px; left: 300px; top: 272px;">Διαγραφή πλαισίου</span>
</div>

<!-- ================= JAMBOARD CANVAS ================= -->
<div id="canvas">
  <!-- tool column -->
  <div class="a" style="left:48px;top:378px;width:34px;height:298px;border-radius:17px;background:#fff;box-shadow:0 0 2px rgba(0,0,0,.08)"></div>
  <div class="a" style="left:51px;top:416px;width:28px;height:121px;border-radius:14px;border:1px solid #ececec;background:#fff"></div>
  <svg style="left:57px;top:388px" width="22" height="16" viewBox="0 0 22 16"><path d="M2 14.500 3.500 10.500 9 5l3.500 3.500L7 14z" fill="#2b2b2b"></path><path d="M10 4l2.500-2.500L16 5l-2.500 2.500z" fill="#2b2b2b"></path><path d="M8 3.500 11 1" stroke="#2b2b2b" stroke-width="1.500"></path><path d="M18 6.500 20 8l-2 1.500z" fill="#777"></path></svg>
  <svg style="left:57px;top:426px" width="16" height="14" viewBox="0 0 16 14"><ellipse cx="8" cy="9" rx="7" ry="4" fill="#d4d7da"></ellipse><path d="M3 9c2-6 4-7 4-4s-1 6 1 4 2-6 3-4 0 4 2 3" fill="none" stroke="#2f9fd0" stroke-width="1.400"></path></svg>
  <div class="a" style="left:50px;top:456.500px;width:30px;height:30px;border-radius:50%;background:#d2d2d2"></div>
  <svg style="left:60px;top:458.500px" width="12" height="22" viewBox="0 0 12 22"><path d="M2.500 3.500a3 3 0 0 1 6 0M3.800 5a1.700 1.700 0 0 1 3.400 0" fill="none" stroke="#bdbdbd" stroke-width=".8"></path><path d="M1 6.500v12l3-3 2.200 5 2-.900L6 14.800h4z" fill="#fff"></path></svg>
  <svg style="left:60px;top:486px" width="11" height="11" viewBox="0 0 11 11"><circle cx="4.500" cy="4.500" r="3.500" fill="none" stroke="#666" stroke-width="1"></circle><path d="M7 7l3.300 3.300M4.500 3v3M3 4.500h3" stroke="#666" stroke-width="1"></path></svg>
  <svg style="left:58px;top:502px" width="14" height="14" viewBox="0 0 14 14"><path d="M1 1h12v8.500L9.500 13H1z" fill="#fff" stroke="#dcdcdc" stroke-width="1"></path><path d="M3.500 5h7M3.500 7.500h5" stroke="#dcdcdc" stroke-width="1"></path></svg>
  <svg style="left:60px;top:517px" width="11" height="11" viewBox="0 0 11 11"><circle cx="4.500" cy="4.500" r="3.500" fill="none" stroke="#666" stroke-width="1"></circle><path d="M7 7l3.300 3.300M3 4.500h3" stroke="#666" stroke-width="1"></path></svg>
  <svg style="left:58px;top:540px" width="14" height="13" viewBox="0 0 14 13"><rect x=".500" y=".500" width="13" height="12" rx="1.500" fill="#2b2b2b"></rect><path d="M2.500 10 5.500 6.500 7.500 8.800 9.500 6l2.500 4z" fill="#fff"></path></svg>
  <svg style="left:57px;top:576px" width="22" height="16" viewBox="0 0 22 16"><circle cx="8" cy="8" r="6.500" fill="none" stroke="#2b2b2b" stroke-width="1.500"></circle><path d="M17.500 6.500 19.500 8l-2 1.500z" fill="#777"></path></svg>
  <div class="a" style="left:50px;top:606px;width:30px;height:30px;border-radius:50%;border:1px solid #e6e6e6;background:#fff"></div>
  <svg style="left:57px;top:613px" width="16" height="16" viewBox="0 0 16 16"><rect x="2" y="2" width="12" height="12" fill="none" stroke="#2b2b2b" stroke-width="1.300"></rect><rect x=".500" y=".500" width="3" height="3" fill="#fff" stroke="#2b2b2b"></rect><rect x="12.500" y=".500" width="3" height="3" fill="#fff" stroke="#2b2b2b"></rect><rect x=".500" y="12.500" width="3" height="3" fill="#fff" stroke="#2b2b2b"></rect><rect x="12.500" y="12.500" width="3" height="3" fill="#fff" stroke="#2b2b2b"></rect><path d="M5.500 5.500h5M8 5.500v5" stroke="#2b2b2b" stroke-width="1.300"></path></svg>
  <svg style="left:58px;top:651px" width="14" height="15" viewBox="0 0 14 15"><path d="M2 6.500 12.500 1.200 11 4.500l2.500-.500L4.500 10.500z" fill="#2b2b2b" stroke="#2b2b2b" stroke-width="1" stroke-linejoin="round"></path><circle cx="3.200" cy="12" r="2" fill="#fff" stroke="#2b2b2b" stroke-width="1.200"></circle></svg>

  <!-- slide -->
  <div class="a" id="slide" style="left:200.500px;top:307px;width:785.500px;height:442px;background:#2d6187"></div>
  <span class="t" style="color: rgb(255, 255, 255); font-size: 26.5px; letter-spacing: 0.23px; left: 345.5px; top: 312.5px;">1. Τι είναι για σένα ο "καλός" πολίτης;</span>
  <span class="t" style="color: rgb(95, 174, 60); text-shadow: rgba(95, 174, 60, 0.55) 1.2px 0px 0px; font-size: 15.5px; letter-spacing: 0.17px; left: 307.5px; top: 420px;">υπεύθυνος</span>
  <span class="t" style="color: rgb(255, 255, 46); -webkit-text-stroke: 0.3px rgb(255, 255, 46); font-size: 16px; letter-spacing: 0.16px; left: 472.5px; top: 412px;">σέβεται τους γύρω του</span>
  <span class="t" style="color: rgb(255, 255, 46); -webkit-text-stroke: 0.3px rgb(255, 255, 46); font-size: 16px; letter-spacing: 0.25px; left: 494px; top: 432.5px;">νομοταγής</span>
  <span class="t" style="font-family: &quot;Liberation Serif&quot;, serif; color: rgb(143, 211, 242); text-shadow: rgba(143, 211, 242, 0.5) 1.2px 0px 0px; font-size: 16.5px; left: 231px; top: 475.5px; transform-origin: 0px 50%; transform: scaleX(0.957);">Σέβεται τους νόμους</span>
  <span class="t" style="color: rgb(74, 227, 227); -webkit-text-stroke: 0.3px rgb(74, 227, 227); font-size: 17.5px; left: 307.5px; top: 519px; transform-origin: 0px 50%; transform: scaleX(0.964);">ενεργός</span>
  <span class="t" style="color: rgb(236, 52, 52); text-shadow: rgba(236, 52, 52, 0.55) 1px 0px 0px; font-size: 17px; left: 741.5px; top: 520.5px; transform-origin: 0px 50%; transform: scaleX(0.944);">δημοκράτης</span>
  <span class="t" style="color: rgb(198, 58, 198); text-shadow: rgba(198, 58, 198, 0.55) 1px 0px 0px; font-size: 17px; left: 541px; top: 577.5px; transform-origin: 0px 50%; transform: scaleX(0.951);">ενημερωμένος</span>
  <svg style="left:300px;top:515px" width="180" height="95" viewBox="300 515 180 95"><path d="M304 537.600c4-2 10-2.600 18-2.600 14 0 30-1 45-3 24-3.500 48-7.500 68-9 12-1 26-1.500 31 0 4 1 8 3 10.600 4.400" fill="none" stroke="#2497cf" stroke-width="1.100"></path><path d="M346.400 604c10-4.500 22-7 36-8.600 18-2.500 36-4.500 52-5.200 8 .3 16 2.800 23 5.800" fill="none" stroke="#2497cf" stroke-width="1.100"></path></svg>
  <svg style="left:535px;top:563px" width="6" height="12" viewBox="0 0 6 12"><path d="M1 .500h4M1 11.500h4M3 .500v11" stroke="#1a2a3a" stroke-width="1" fill="none"></path></svg>
  <div class="a" style="left:1040px;top:563px;width:1px;height:15px;background:#222"></div>

  <!-- taskbar -->
  <div class="a" style="left:40px;top:760px;width:1106px;height:28px;background:#1b1b1b"></div>
  <div class="a" style="left:40px;top:760px;width:33px;height:28px;background:#111"></div>
  <svg style="left:49px;top:767px" width="13" height="13" viewBox="0 0 13 13"><path d="M0 1.800 5.300 1v5H0zM6.200.900 13 0v6H6.200zM0 7h5.300v5L0 11.200zM6.200 7H13v6l-6.800-.900z" fill="#fff"></path></svg>
  <div class="a" style="left:73px;top:760px;width:248px;height:28px;background:#f1f1f1"></div>
  <svg style="left:81px;top:767px" width="13" height="13" viewBox="0 0 13 13"><circle cx="8" cy="5" r="4" fill="none" stroke="#222" stroke-width="1.200"></circle><path d="M5 8 1 12.200" stroke="#222" stroke-width="1.300"></path></svg>
  <span class="t" style="color: rgb(60, 60, 60); font-size: 12.5px; left: 102.5px; top: 769px; transform-origin: 0px 50%; transform: scaleX(0.904);">Πληκτρολογήστε εδώ για αναζήτηση</span>
  <svg style="left:332px;top:767px" width="14" height="14" viewBox="0 0 14 14"><circle cx="7" cy="7" r="5" fill="none" stroke="#fff" stroke-width="1.500"></circle></svg>
  <svg style="left:367px;top:768px" width="13" height="12" viewBox="0 0 13 12"><path d="M1 1h6M1 11h6M2.500 3.500h4.500v5H2.500zM10.500 1v1.500M10.500 4v4M10.500 9.500V11" fill="none" stroke="#e8e8e8" stroke-width="1"></path></svg>
  <!-- apps -->
  <svg style="left:402px;top:766px" width="16" height="15" viewBox="0 0 16 15"><path d="M0 2h6l1.500 2H16v10H0z" fill="#f6b73c"></path><rect x="0" y="5" width="16" height="9" fill="#ffd35a"></rect><rect x="3" y="9" width="10" height="5" fill="#3a8ee6"></rect><rect x="5" y="11" width="6" height="3" fill="#ffd35a"></rect></svg>
  <svg style="left:439px;top:765px" width="14" height="17" viewBox="0 0 14 17"><circle cx="4" cy="4" r="3" fill="#f4ead8"></circle><circle cx="9.500" cy="3.500" r="3" fill="#f4ead8"></circle><circle cx="7" cy="5" r="3" fill="#e8dcc4"></circle><path d="M1.500 6.500h11L11 16.500H3z" fill="#e64a4a"></path><path d="M4.500 6.500 5 16.500M7 6.500v10M9.500 6.500 9 16.500" stroke="#f8e8e8" stroke-width="1.300"></path></svg>
  <svg style="left:475px;top:765px" width="17" height="17" viewBox="0 0 17 17"><path d="M1 0h9l3 3v13H1z" fill="#eef0f2"></path><path d="M3 4h6M3 6.500h6M3 9h5M3 11.500h4" stroke="#9aa0a8" stroke-width="1"></path><circle cx="11" cy="9.500" r="3.200" fill="#3a78b0"></circle><circle cx="13" cy="12.500" r="3.200" fill="#f2c53a"></circle></svg>
  <svg style="left:509px;top:765px" width="17" height="17" viewBox="0 0 17 17"><circle cx="8.500" cy="8.500" r="8.500" fill="#fbbc05"></circle><path d="M8.500 8.500 1.200 4.200A8.500 8.500 0 0 1 15.800 4.200z" fill="#ea4335"></path><path d="M8.500 8.500 1.200 4.200A8.500 8.500 0 0 0 8.500 17z" fill="#34a853"></path><circle cx="8.500" cy="8.500" r="3.900" fill="#fff"></circle><circle cx="8.500" cy="8.500" r="3" fill="#4285f4"></circle></svg>
  <svg style="left:545px;top:765px" width="17" height="17" viewBox="0 0 17 17"><circle cx="9" cy="9" r="7" fill="#12303c" stroke="#5a4a20" stroke-width="1.200"></circle><path d="M4 1h4.500v12h5l-1.500 3H3l1.500-2.500z" fill="#d9a93c"></path></svg>
  <svg style="left:581px;top:765px" width="17" height="17" viewBox="0 0 17 17"><ellipse cx="8.500" cy="8.500" rx="8.300" ry="8.500" fill="#e81123"></ellipse><ellipse cx="8.500" cy="8.500" rx="3.500" ry="6" fill="#1b1b1b"></ellipse></svg>
  <svg style="left:617px;top:765px" width="17" height="17" viewBox="0 0 17 17"><circle cx="8.500" cy="8.500" r="8.500" fill="#6cb33f"></circle><path d="M5 4.500v5.500a2.500 2.500 0 0 0 5 0V4.500M10 4.500v6.500c0 1.500 1 2 2.500 2" fill="none" stroke="#fff" stroke-width="1.800"></path></svg>
  <svg style="left:653px;top:765px" width="16" height="17" viewBox="0 0 16 17"><rect width="16" height="17" rx="1" fill="#2f8fe8"></rect><path d="M0 13 6 6l5 6 2-2 3 3v4H0z" fill="#1058b8"></path><circle cx="11" cy="5" r="1.700" fill="#d8ecff"></circle></svg>
  <svg style="left:689px;top:765px" width="18" height="18" viewBox="0 0 18 18"><circle cx="8" cy="8" r="8" fill="#fbbc05"></circle><path d="M8 8 1.100 4A8 8 0 0 1 14.900 4z" fill="#ea4335"></path><path d="M8 8 1.100 4A8 8 0 0 0 8 16z" fill="#34a853"></path><circle cx="8" cy="8" r="3.600" fill="#fff"></circle><circle cx="8" cy="8" r="2.800" fill="#4285f4"></circle><circle cx="12.500" cy="12.500" r="5" fill="#4a5848"></circle><rect x="12" y="10" width="2.500" height="6" fill="#d0d0d0"></rect></svg>
  <svg style="left:724px;top:766px" width="17" height="16" viewBox="0 0 17 16"><rect x="5" y="0" width="12" height="16" rx="1" fill="#2b7cd3"></rect><rect x="5" y="0" width="12" height="4" fill="#41a5ee"></rect><rect x="5" y="12" width="12" height="4" fill="#103f91"></rect><rect x="0" y="3.500" width="9.500" height="9.500" rx="1" fill="#185abd"></rect><path d="M2 6l1.300 5L4.800 7.500 6.200 11 7.500 6" fill="none" stroke="#fff" stroke-width="1"></path></svg>
  <svg style="left:759px;top:765px" width="18" height="17" viewBox="0 0 18 17"><circle cx="10" cy="8.500" r="8" fill="#ed6c47"></circle><path d="M10 .500a8 8 0 0 1 8 8h-8z" fill="#ff8f6b"></path><path d="M2 8.500h16a8 8 0 0 1-16 0z" fill="#d35230"></path><rect x="0" y="4" width="9" height="9" rx="1" fill="#c43e1c"></rect><path d="M3.300 11V6h1.800a1.600 1.600 0 0 1 0 3.200H3.300" fill="none" stroke="#fff" stroke-width="1.100"></path></svg>
  <!-- running indicators -->
  <div class="a" style="left:396px;top:786.500px;width:30px;height:1.500px;background:#c9d9ea"></div>
  <div class="a" style="left:611px;top:786.500px;width:29px;height:1.500px;background:#b4c6da"></div>
  <div class="a" style="left:647px;top:786.500px;width:29px;height:1.500px;background:#b4c6da"></div>
  <div class="a" style="left:682px;top:786.500px;width:30px;height:1.500px;background:#b4c6da"></div>
  <div class="a" style="left:718px;top:786.500px;width:30px;height:1.500px;background:#b4c6da"></div>
  <div class="a" style="left:754px;top:786.500px;width:30px;height:1.500px;background:#b4c6da"></div>
  <!-- tray -->
  <svg style="left:916px;top:770px" width="11" height="7" viewBox="0 0 11 7"><path d="M1 6 5.500 1.500 10 6" fill="none" stroke="#f0f0f0" stroke-width="1.100"></path></svg>
  <svg style="left:933px;top:769px" width="13" height="9" viewBox="0 0 13 9"><rect x="2.500" y="2.500" width="10" height="5.500" fill="#f0f0f0"></rect><path d="M1 1l2 2M1 3.500V1h2.500" fill="none" stroke="#f0f0f0" stroke-width="1"></path></svg>
  <svg style="left:950px;top:767px" width="13" height="13" viewBox="0 0 13 13"><circle cx="4" cy="2.500" r="1.800" fill="#f0f0f0"></circle><circle cx="9.500" cy="2.500" r="1.800" fill="#f0f0f0"></circle><circle cx="9.500" cy="7" r="1.800" fill="#f0f0f0"></circle><circle cx="9" cy="11" r="1.500" fill="#f0f0f0"></circle><rect x="0" y="5" width="6.500" height="7.500" rx="1" fill="#e0102a"></rect><path d="M3.300 6.500v4.500" stroke="#fff" stroke-width="1.200"></path></svg>
  <svg style="left:967px;top:768px" width="15" height="12" viewBox="0 0 15 12"><path d="M3.500 9.500h8a2.800 2.800 0 0 0 .300-5.500A4 4 0 0 0 4.200 3.500 3 3 0 0 0 3.500 9.500z" fill="#9a9a9a"></path><path d="M1.500 1 13 11" stroke="#cfcfcf" stroke-width="1"></path></svg>
  <svg style="left:984px;top:767px" width="15" height="13" viewBox="0 0 15 13"><rect x="3" y="1.500" width="11" height="8" fill="none" stroke="#f0f0f0" stroke-width="1"></rect><path d="M6.500 12h4M8.500 9.500V12" stroke="#f0f0f0" stroke-width="1"></path><rect x="0" y="0" width="3" height="4" fill="none" stroke="#f0f0f0" stroke-width=".800"></rect><path d="M1.500 4v5" stroke="#f0f0f0" stroke-width=".800"></path></svg>
  <svg style="left:1002px;top:767px" width="15" height="14" viewBox="0 0 15 14"><rect x=".500" y="2.500" width="11" height="9" fill="none" stroke="#f0f0f0" stroke-width="1"></rect><path d="M2 1h12v9" fill="none" stroke="#f0f0f0" stroke-width="1"></path><path d="M3.500 7.500a2.500 2.500 0 0 1 4.500-1.500M8.500 7a2.500 2.500 0 0 1-4.500 1.500" fill="none" stroke="#f0f0f0" stroke-width=".900"></path><circle cx="10.500" cy="11" r="2.600" fill="#f59a1b"></circle></svg>
  <svg style="left:1019px;top:768px" width="14" height="12" viewBox="0 0 14 12"><path d="M1 4.200h2L6 1.500v9L3 7.800H1z" fill="none" stroke="#f0f0f0" stroke-width="1"></path><path d="M8 4a3 3 0 0 1 0 4M10 2.500a5 5 0 0 1 0 7" fill="none" stroke="#f0f0f0" stroke-width="1"></path><path d="M12 1a7 7 0 0 1 0 10" fill="none" stroke="#7a7a7a" stroke-width="1"></path></svg>
  <span class="t" style="color: rgb(244, 244, 244); font-size: 9px; left: 1043px; top: 771px; transform-origin: 0px 50%; transform: scaleX(0.915);">ΕΛ</span>
  <span class="t" style="color: rgb(244, 244, 244); font-size: 10px; left: 1070.5px; top: 762.5px; transform-origin: 0px 50%; transform: scaleX(0.859);">6:21 μμ</span>
  <span class="t" style="color: rgb(244, 244, 244); font-size: 10px; left: 1065.5px; top: 776px; transform-origin: 0px 50%; transform: scaleX(0.876);">22/2/2021</span>
  <svg style="left:1117px;top:767px" width="14" height="13" viewBox="0 0 14 13"><path d="M.500.500h11.500v9H8l-2 2.500v-2.500H.5z" fill="#f2f2f2"></path><path d="M2.500 3h7.500M2.500 5h7.500M2.500 7h5" stroke="#1b1b1b" stroke-width=".800"></path><circle cx="10.500" cy="9.500" r="2.700" fill="#1b1b1b" stroke="#f2f2f2" stroke-width=".900"></circle></svg>
</div>

<!-- ================= ANNOTATION STRIP (left) ================= -->
<div id="annot">
  <div class="a" style="left:0;top:320px;width:36px;height:25px;border-radius:0 4px 4px 0;background:#d6d6d6"></div>
  <svg style="left:10px;top:287px" width="24" height="14" viewBox="0 0 24 14"><path class="ic" d="M1 7h12.500M9 2.500 13.500 7 9 11.500"></path><path class="ic" d="M19.500 5.200 21.300 7l-1.800 1.800" stroke-width="1"></path></svg>
  <svg style="left:11px;top:327px" width="15" height="12" viewBox="0 0 15 12"><path class="ic" d="M.5 1.500h8M4.500 1.500v9.500M8.500 5.500h5.500M11.200 5.500V11" stroke-linecap="butt"></path></svg>
  <svg style="left:10px;top:365px" width="24" height="14" viewBox="0 0 24 14"><path class="ic" d="M3 12 13 2.500"></path><path class="ic" d="M19.500 5.200 21.300 7l-1.800 1.800" stroke-width="1"></path></svg>
  <svg style="left:10px;top:404px" width="24" height="14" viewBox="0 0 24 14"><rect class="ic" x="1.200" y=".700" width="12.600" height="12.600" rx="1.500"></rect><path class="ic" d="M19.500 5.200 21.300 7l-1.800 1.800" stroke-width="1"></path></svg>
  <svg style="left:10px;top:443px" width="24" height="14" viewBox="0 0 24 14"><path class="ic" d="M1.500 13 2.500 9.500 11 1.200a1.400 1.400 0 0 1 2 0l.8.800a1.400 1.400 0 0 1 0 2L5.200 12.200z"></path><path class="ic" d="M19.500 5.200 21.300 7l-1.800 1.800" stroke-width="1"></path></svg>
  <svg style="left:10px;top:482px" width="24" height="14" viewBox="0 0 24 14"><rect x="1.200" y=".700" width="12.600" height="12.600" rx="1.500" fill="#ff0000" stroke="#7a2020" stroke-width="1"></rect><path class="ic" d="M19.500 5.200 21.300 7l-1.800 1.800" stroke-width="1"></path></svg>
  <svg style="left:10px;top:520px" width="24" height="15" viewBox="0 0 24 15"><path class="ic" d="M1.500 8.500 8.500 1.800a1.500 1.500 0 0 1 2 0l3 3a1.500 1.500 0 0 1 0 2L6.800 13.500H4.500zM4.500 5.600l5 5"></path><path class="ic" d="M19.500 5.700 21.300 7.500l-1.800 1.800" stroke-width="1"></path></svg>
  <svg style="left:12px;top:561px" width="14" height="14" viewBox="0 0 14 14"><path class="ic" d="M4 .700H2.200A1.500 1.500 0 0 0 .7 2.200v9.600a1.500 1.500 0 0 0 1.500 1.500h9.600a1.500 1.500 0 0 0 1.500-1.500V2.200A1.500 1.500 0 0 0 11.800.7H10M7 1v8.500M3.800 6.500 7 9.700l3.200-3.200"></path></svg>
</div>

<!-- ================= RIGHT PANEL ================= -->
<div id="panel">
  <div class="a" style="left:1147.500px;top:53px;width:383.500px;height:772px;background:#fff"></div>
  <!-- participants header -->
  <svg style="left:1156px;top:66px" width="9" height="7" viewBox="0 0 9 7"><path d="M.7 1.200 4.500 5.300 8.300 1.200" fill="none" stroke="#444" stroke-width="1"></path></svg>
  <span class="t" style="font-weight: bold; color: rgb(26, 26, 26); font-size: 12.5px; left: 1170.5px; top: 64.5px; transform-origin: 0px 50%; transform: scaleX(0.905);">Participants (24)</span>
  <svg style="left:1514px;top:65px" width="8" height="8" viewBox="0 0 8 8"><path d="M.7.700l6.600 6.600M7.300.700.7 7.300" stroke="#222" stroke-width="1.100"></path></svg>
  <div class="a" style="left:1163px;top:90px;width:337px;height:26px;border-radius:13px;border:1px solid #c6c6c6;background:#fff"></div>
  <svg style="left:1172px;top:97px" width="12" height="12" viewBox="0 0 12 12"><circle cx="5" cy="5" r="3.900" fill="none" stroke="#222" stroke-width="1.100"></circle><path d="M7.800 7.800 11 11" stroke="#222" stroke-width="1.100"></path></svg>
  <span class="t" style="color: rgb(106, 106, 106); font-size: 12px; left: 1190px; top: 97px; transform-origin: 0px 50%; transform: scaleX(0.881);">Search</span>
  <svg style="left:1510px;top:96px" width="15" height="14" viewBox="0 0 15 14"><path d="M3.500 1v11.500M1 10l2.500 2.500M7 3h7.500M7 7h7.500M7 11h7.500" fill="none" stroke="#333" stroke-width="1"></path></svg>
  <!-- scrollbar -->
  <div class="a" style="left:1525px;top:122px;width:4px;height:131px;border-radius:2px;background:#c4c4c4"></div>
  <div class="a" style="left:1149px;top:232px;width:376px;height:37px;background:#dedede"></div>

  <!-- row 1 -->
  <svg style="left:1162px;top:126.1px" width="25" height="25"><use href="#usr"></use></svg>
  <svg style="left:1191px;top:130.2px" width="12" height="12"><use href="#hs"></use></svg>
  <span class="t" style="color: rgb(17, 17, 17); font-size: 12.5px; left: 1210.2px; top: 127.2px; transform-origin: 0px 50%; transform: scaleX(0.898);">ΓΑΡΙΟΥ ΑΓΓΕΛΙΚΗ</span>
  <span class="t" style="color: rgb(85, 85, 85); font-size: 10.5px; left: 1210.2px; top: 143.2px; transform-origin: 0px 50%; transform: scaleX(0.978);">Cohost, me</span>
  <svg style="left:1464px;top:136.6px" width="11.700" height="9"><use href="#cam"></use></svg>
  <svg style="left:1501px;top:134.3px" width="10" height="12"><use href="#mm"></use></svg>
  <!-- row 2 -->
  <svg style="left:1162px;top:163.4px" width="25" height="25" viewBox="0 0 25 25"><defs><clipPath id="cp1"><circle cx="12.500" cy="12.500" r="12.500"></circle></clipPath><linearGradient id="sk1" x1="0" y1="0" x2="0" y2="1"><stop offset="0" stop-color="#9c98bc"></stop><stop offset=".5" stop-color="#c4c4d6"></stop><stop offset=".58" stop-color="#8294ac"></stop><stop offset=".85" stop-color="#74889e"></stop><stop offset=".9" stop-color="#4a5058"></stop><stop offset="1" stop-color="#5a5a58"></stop></linearGradient></defs><g clip-path="url(#cp1)"><rect width="25" height="25" fill="url(#sk1)"></rect><path d="M10.500 6v9M8 14l2.500-7 2.500 7" stroke="#e0cf9a" stroke-width=".900" fill="none"></path><path d="M0 14.500h25" stroke="#d8d8d0" stroke-width=".800"></path></g><circle cx="19.500" cy="20" r="4.600" fill="#fff"></circle><circle cx="19.500" cy="20" r="4" fill="#0f7fb8"></circle><circle cx="19.500" cy="20" r="2.600" fill="#f4faf0"></circle><path d="M17.500 21.800a2.600 2.600 0 0 0 4.500-1.300c-1 1.500-3 2-4.500 1.300z" fill="#55b848"></path></svg>
  <svg style="left:1191px;top:167.5px" width="12" height="12"><use href="#hs"></use></svg>
  <span class="t" style="color: rgb(17, 17, 17); font-size: 12.5px; left: 1210.2px; top: 164.5px; transform-origin: 0px 50%; transform: scaleX(0.918);">ΝΙΚΟΛΑΚΟΠΟΥΛΟΥ ΑΙΚΑΤΕΡΙΝΗ</span>
  <span class="t" style="color: rgb(85, 85, 85); font-size: 10.5px; left: 1210.2px; top: 180.5px; transform-origin: 0px 50%; transform: scaleX(0.996);">Host</span>
  <svg style="left:1464px;top:173.9px" width="11.700" height="9"><use href="#cam"></use></svg>
  <svg style="left:1502px;top:171.6px" width="8" height="12" viewBox="0 0 8 12"><rect x="2" y=".500" width="4" height="7" rx="2" fill="#27b14a"></rect><path d="M.7 5.400a3.300 3.300 0 0 0 6.600 0M4 9v2M2.200 11.300h3.600" fill="none" stroke="#27b14a" stroke-width="1"></path></svg>
  <!-- row 3 -->
  <svg style="left:1162px;top:200.8px" width="25" height="25" viewBox="0 0 25 25"><defs><clipPath id="cp2"><circle cx="12.500" cy="12.500" r="12.500"></circle></clipPath></defs><g clip-path="url(#cp2)"><rect width="25" height="25" fill="#c2c2c2"></rect><path d="M0 0h25v5c-4 2-8-1-12 1s-8 1-13-1z" fill="#4c4c4a"></path><rect y="19" width="25" height="6" fill="#b0b0ae"></rect><path d="M5 25c0-5 2-8 5-8s5 2 6 5l1 3z" fill="#262a30"></path><circle cx="11.500" cy="16.500" r="2.300" fill="#4a4446"></circle></g></svg>
  <svg style="left:1191px;top:204.9px" width="12" height="12"><use href="#hs"></use></svg>
  <span class="t" style="color: rgb(17, 17, 17); font-size: 12.5px; left: 1210.2px; top: 201.9px; transform-origin: 0px 50%; transform: scaleX(0.921);">ΜΠΑΡΤΖΑΚΛΗ ΜΑΡΙΑΝΝΑ</span>
  <span class="t" style="color: rgb(85, 85, 85); font-size: 10.5px; left: 1210.2px; top: 217.9px; transform-origin: 0px 50%; transform: scaleX(0.977);">Cohost</span>
  <svg style="left:1464px;top:211.3px" width="11.700" height="9"><use href="#cam"></use></svg>
  <svg style="left:1501px;top:209.0px" width="10" height="12"><use href="#mm"></use></svg>
  <!-- row 4 -->
  <svg style="left:1162px;top:238.2px" width="25" height="25"><use href="#usr"></use></svg>
  <svg style="left:1191px;top:242.3px" width="12" height="12"><use href="#hs"></use></svg>
  <span class="t" style="color: rgb(17, 17, 17); font-size: 12.5px; left: 1210.2px; top: 239.2px; transform-origin: 0px 50%; transform: scaleX(0.894);">ΣΑΦΑΡΙΚΑ ΑΙΚΑΤΕΡΙΝΗ</span>
  <span class="t" style="color: rgb(85, 85, 85); font-size: 10.5px; left: 1210.2px; top: 255.2px; transform-origin: 0px 50%; transform: scaleX(0.977);">Cohost</span>
  <svg style="left:1464px;top:248.7px" width="11.700" height="9"><use href="#cam"></use></svg>
  <!-- row 5 -->
  <div class="a" style="left:1162px;top:275.5px;width:25px;height:25px;border-radius:50%;background:#ececec"></div>
  <span class="t" style="color: rgb(85, 85, 85); font-size: 10.5px; left: 1171.2px; top: 283px;">D</span>
  <svg style="left:1191px;top:279.6px" width="12" height="12"><use href="#hs"></use></svg>
  <span class="t" style="color: rgb(17, 17, 17); font-size: 12.5px; left: 1210.2px; top: 283.6px; transform-origin: 0px 50%; transform: scaleX(0.926);">dionysia</span>
  <svg style="left:1464px;top:286.0px" width="11.700" height="9"><use href="#cam"></use></svg>
  <svg style="left:1501px;top:283.7px" width="10" height="12"><use href="#mm"></use></svg>
  <!-- row 6 -->
  <svg style="left:1162px;top:312.9px" width="25" height="25"><use href="#usr"></use></svg>
  <svg style="left:1191px;top:317.0px" width="12" height="12"><use href="#hs"></use></svg>
  <span class="t" style="color: rgb(17, 17, 17); font-size: 12.5px; left: 1210.2px; top: 321px; transform-origin: 0px 50%; transform: scaleX(0.994);">Αγγελική Πούντζα</span>
  <svg style="left:1464px;top:323.4px" width="11.700" height="9"><use href="#cam"></use></svg>
  <svg style="left:1501px;top:321.1px" width="10" height="12"><use href="#mm"></use></svg>
  <!-- row 7 -->
  <svg style="left:1162px;top:350.2px" width="25" height="25"><use href="#usr"></use></svg>
  <svg style="left:1193px;top:355.7px" width="8" height="11" viewBox="0 0 8 11"><rect x=".600" y=".600" width="6.800" height="9.800" rx="1.200" fill="none" stroke="#222" stroke-width="1.100"></rect><path d="M.6 8h6.800" stroke="#222" stroke-width="1"></path></svg>
  <span class="t" style="color: rgb(17, 17, 17); font-size: 12.5px; left: 1210.2px; top: 358.3px; transform-origin: 0px 50%; transform: scaleX(0.951);">Αλέξανδρος Ζηκος</span>
  <svg style="left:1501px;top:358.4px" width="10" height="12"><use href="#mm"></use></svg>
  <!-- row 8 -->
  <svg style="left:1162px;top:387.5px" width="25" height="25"><use href="#usr"></use></svg>
  <svg style="left:1191px;top:391.6px" width="12" height="12"><use href="#hs"></use></svg>
  <span class="t" style="color: rgb(17, 17, 17); font-size: 12.5px; left: 1210.2px; top: 395.6px; transform-origin: 0px 50%; transform: scaleX(0.901);">ΑΛΕΞΟΠΟΥΛΟΥ ΝΙΚΟΛΙΤΣΑ</span>
  <svg style="left:1501px;top:395.7px" width="10" height="12"><use href="#mm"></use></svg>
  <!-- row 9 -->
  <svg style="left:1162px;top:424.9px" width="25" height="25"><use href="#usr"></use></svg>
  <svg style="left:1191px;top:429.0px" width="12" height="12"><use href="#hs"></use></svg>
  <span class="t" style="color: rgb(17, 17, 17); font-size: 12.5px; letter-spacing: 0.15px; left: 1210.2px; top: 433px;">Αναστασία Γιατρά</span>
  <svg style="left:1501px;top:433.1px" width="10" height="12"><use href="#mm"></use></svg>
  <!-- partial row 10 -->
  <svg style="left:1165px;top:464px" width="20" height="4" viewBox="0 0 20 4"><path d="M0 4c3-5 17-5 20 0z" fill="#dfe8ee"></path><circle cx="14" cy="2.500" r="1.500" fill="#3db04a"></circle></svg>
  <!-- mute buttons -->
  <div class="a" style="left:1160px;top:476px;width:158px;height:27px;border-radius:14px;background:#dedede"></div>
  <span class="t" style="color: rgb(34, 34, 34); font-size: 12.5px; left: 1217.5px; top: 484px; transform-origin: 0px 50%; transform: scaleX(0.971);">Mute all</span>
  <div class="a" style="left:1326px;top:476px;width:157.500px;height:27px;border-radius:14px;background:#dedede"></div>
  <span class="t" style="color: rgb(34, 34, 34); font-size: 12.5px; left: 1376.5px; top: 484px; transform-origin: 0px 50%; transform: scaleX(0.954);">Unmute all</span>
  <div class="a" style="left:1492.500px;top:476px;width:27px;height:27px;border-radius:50%;background:#dedede"></div>
  <svg style="left:1501px;top:488px" width="10" height="3" viewBox="0 0 10 3"><circle cx="1.200" cy="1.500" r=".900" fill="#222"></circle><circle cx="5" cy="1.500" r=".900" fill="#222"></circle><circle cx="8.800" cy="1.500" r=".900" fill="#222"></circle></svg>
  <div class="a" style="left:1149px;top:511.500px;width:382px;height:1.500px;background:#dcdcdc"></div>
  <!-- chat -->
  <svg style="left:1156px;top:528px" width="9" height="7" viewBox="0 0 9 7"><path d="M.7 1.200 4.500 5.300 8.300 1.200" fill="none" stroke="#444" stroke-width="1"></path></svg>
  <span class="t" style="font-weight: bold; color: rgb(26, 26, 26); font-size: 12.5px; left: 1170.5px; top: 526.5px; transform-origin: 0px 50%; transform: scaleX(0.9);">Chat</span>
  <svg style="left:1514px;top:527px" width="8" height="8" viewBox="0 0 8 8"><path d="M.7.700l6.600 6.600M7.300.700.7 7.300" stroke="#222" stroke-width="1.100"></path></svg>
  <div class="a" style="left:1517.500px;top:551.500px;width:13px;height:191.500px;background:#f0f0f0"></div>
  <div class="a" style="left:1517.500px;top:579px;width:12.500px;height:84px;background:#c8c8c8"></div>
  <svg style="left:1520px;top:556px" width="8" height="6" viewBox="0 0 8 6"><path d="M1 5 4 1.500 7 5" fill="none" stroke="#444" stroke-width="1.500"></path></svg>
  <svg style="left:1520px;top:733px" width="8" height="6" viewBox="0 0 8 6"><path d="M1 1 4 4.500 7 1" fill="none" stroke="#444" stroke-width="1.500"></path></svg>

  <span class="t" style="color: rgb(34, 34, 34); font-size: 12.5px; left: 1154.5px; top: 552.8px; transform-origin: 0px 50%; transform: scaleX(0.989);">Πιο ελκυστικό μάθημα</span>
  <span class="t" style="color: rgb(142, 142, 142); font-size: 11px; left: 1154.5px; top: 567.2px; transform-origin: 0px 50%; transform: scaleX(0.904);">from ΚΟΡΦΙΑΤΗΣ ΝΙΚΟΛΑΟΣ to everyone:   6:11 PM</span>
  <span class="t" style="color: rgb(34, 34, 34); font-size: 12.5px; left: 1154.5px; top: 581.7px; transform-origin: 0px 50%; transform: scaleX(1);">Κάνει το μάθημα ευχάριστο!</span>
  <span class="t" style="color: rgb(142, 142, 142); font-size: 11px; left: 1154.5px; top: 596.1px; transform-origin: 0px 50%; transform: scaleX(0.912);">from ΒΕΡΡΑ ΜΑΡΙΑ to everyone:   6:11 PM</span>
  <span class="t" style="color: rgb(34, 34, 34); font-size: 12.5px; left: 1154.5px; top: 610.6px; transform-origin: 0px 50%; transform: scaleX(0.977);">Ενισχυει το κινητρο μαθησης</span>
  <span class="t" style="color: rgb(142, 142, 142); font-size: 11px; left: 1154.5px; top: 625px; transform-origin: 0px 50%; transform: scaleX(0.902);">from ΣΑΦΑΡΙΚΑ ΑΙΚΑΤΕΡΙΝΗ to everyone:   6:12 PM</span>
  <span class="t" style="color: rgb(34, 34, 34); font-size: 12.5px; left: 1154.5px; top: 639.5px; transform-origin: 0px 50%; transform: scaleX(0.991);">Ομαδικότητα, συναγωνισμό, στοχοθεσία</span>
  <span class="t" style="color: rgb(142, 142, 142); font-size: 11px; left: 1154.5px; top: 653.9px; transform-origin: 0px 50%; transform: scaleX(0.928);">from ΜΠΑΙΛΟΥ ΛΟΥΔΙΑ to everyone:   6:12 PM</span>
  <span class="t" style="color: rgb(34, 34, 34); font-size: 12.5px; left: 1154.5px; top: 668.4px; transform-origin: 0px 50%; transform: scaleX(0.99);">βιωματικη μαθηση</span>
  <span class="t" style="color: rgb(142, 142, 142); font-size: 11px; left: 1154.5px; top: 682.8px; transform-origin: 0px 50%; transform: scaleX(0.921);">from dionysia to everyone:   6:12 PM</span>
  <span class="t" style="color: rgb(34, 34, 34); font-size: 12.5px; left: 1154.5px; top: 697.3px; transform-origin: 0px 50%; transform: scaleX(0.975);">δινει  κινηση</span>
  <span class="t" style="color: rgb(142, 142, 142); font-size: 11px; left: 1154.5px; top: 711.7px; transform-origin: 0px 50%; transform: scaleX(0.902);">from ΣΑΦΑΡΙΚΑ ΑΙΚΑΤΕΡΙΝΗ to everyone:   6:12 PM</span>
  <span class="t" style="color: rgb(34, 34, 34); font-size: 12.5px; left: 1154.5px; top: 726.2px; transform-origin: 0px 50%; transform: scaleX(0.958);">κανόνες</span>
  <span class="t" style="color: rgb(34, 34, 34); font-size: 11px; left: 1158px; top: 755px; transform-origin: 0px 50%; transform: scaleX(0.851);">To:</span>
  <div class="a" style="left:1179px;top:749px;width:348px;height:23px;border-radius:3px;border:1px solid #c4c4c4;background:#fff"></div>
  <span class="t" style="color: rgb(85, 85, 85); font-size: 11px; left: 1186px; top: 755px; transform-origin: 0px 50%; transform: scaleX(0.882);">Everyone</span>
  <svg style="left:1511px;top:757px" width="9" height="6" viewBox="0 0 9 6"><path d="M1 1 4.500 4.500 8 1" fill="none" stroke="#555" stroke-width="1"></path></svg>
  <span class="t" style="color: rgb(106, 106, 106); font-size: 12.5px; left: 1164.5px; top: 785px; transform-origin: 0px 50%; transform: scaleX(0.913);">Enter chat message here</span>
</div>

<!-- ================= BOTTOM BAR ================= -->
<div id="bottombar">
  <div class="a" style="left:534px;top:832px;width:107px;height:37px;border-radius:19px;background:#fff"></div>
  <svg style="left:548.800px;top:844px" width="10.500" height="14" viewBox="0 0 12 16"><rect x="3.700" y="1" width="4.600" height="8.500" rx="2.300" fill="none" stroke="#e8503a" stroke-width="1.100"></rect><path d="M1.500 7.500a4.500 4.500 0 0 0 9 0M6 12v2.500M3.500 14.800h5M10.500 1 2 14" fill="none" stroke="#e8503a" stroke-width="1.100"></path></svg>
  <span class="t" style="color: rgb(34, 34, 34); font-size: 14.5px; left: 568px; top: 844px; transform-origin: 0px 50%; transform: scaleX(0.935);">Unmute</span>
  <svg style="left:626px;top:848px" width="9" height="6" viewBox="0 0 9 6"><path d="M1 1 4.500 4.500 8 1" fill="none" stroke="#333" stroke-width="1.200"></path></svg>

  <div class="a" style="left:648px;top:832px;width:122px;height:37px;border-radius:19px;background:#fff"></div>
  <svg style="left:661px;top:845px" width="15" height="12" viewBox="0 0 15 12"><rect x=".700" y=".700" width="10" height="10.600" rx="2" fill="none" stroke="#222" stroke-width="1.200"></rect><path d="M11.500 4.500 14 3v6l-2.500-1.500" fill="none" stroke="#222" stroke-width="1.200" stroke-linejoin="round"></path><circle cx="3.700" cy="3.800" r="1.300" fill="#2fb24c"></circle></svg>
  <span class="t" style="color: rgb(34, 34, 34); font-size: 14.5px; left: 681.5px; top: 844px; transform-origin: 0px 50%; transform: scaleX(0.912);">Stop video</span>
  <svg style="left:755px;top:848px" width="9" height="6" viewBox="0 0 9 6"><path d="M1 1 4.500 4.500 8 1" fill="none" stroke="#333" stroke-width="1.200"></path></svg>

  <div class="a" style="left:777px;top:832px;width:81.500px;height:37px;border-radius:19px;background:#dedede"></div>
  <svg style="left:789px;top:844px" width="14" height="13" viewBox="0 0 14 13"><path d="M4 3.500H2.200A1.500 1.500 0 0 0 .7 5v5.800a1.500 1.500 0 0 0 1.500 1.500h9.600a1.500 1.500 0 0 0 1.500-1.500V5a1.500 1.500 0 0 0-1.500-1.500H10M7 9V1M4.500 3.200 7 .8l2.500 2.400" fill="none" stroke="#b4b4b4" stroke-width="1.100"></path></svg>
  <span class="t" style="color: rgb(180, 180, 180); font-size: 14.5px; left: 809.5px; top: 844px; transform-origin: 0px 50%; transform: scaleX(0.878);">Share</span>

  <div class="a" style="left:865.500px;top:832px;width:37.500px;height:37.500px;border-radius:50%;background:#fff"></div>
  <svg style="left:876px;top:842px" width="17" height="17" viewBox="0 0 17 17"><path d="M13.800 5.500A6.300 6.300 0 1 1 11 2.600" fill="none" stroke="#222" stroke-width="1.200"></path><circle cx="5.700" cy="7" r=".900" fill="#222"></circle><circle cx="10" cy="7" r=".900" fill="#222"></circle><path d="M5 10.200c1.500 2 4.300 2 5.800 0" fill="none" stroke="#222" stroke-width="1.100"></path><path d="M14 .800v4M12 2.800h4" stroke="#222" stroke-width="1.100"></path></svg>
  <div class="a" style="left:909.500px;top:832px;width:37.500px;height:37.500px;border-radius:50%;background:#fff"></div>
  <svg style="left:922px;top:849px" width="13" height="3" viewBox="0 0 13 3"><circle cx="1.500" cy="1.500" r="1" fill="#222"></circle><circle cx="6.500" cy="1.500" r="1" fill="#222"></circle><circle cx="11.500" cy="1.500" r="1" fill="#222"></circle></svg>
  <div class="a" style="left:953.500px;top:832px;width:37.500px;height:37.500px;border-radius:50%;background:#dc3b1f"></div>
  <svg style="left:967px;top:845.500px" width="11" height="11" viewBox="0 0 11 11"><path d="M1 1l9 9M10 1 1 10" stroke="#fff" stroke-width="1.300"></path></svg>

  <div class="a" style="left:1355.500px;top:833.500px;width:166px;height:34.500px;border-radius:17.500px;background:#fff"></div>
  <div class="a" style="left:1455px;top:833.500px;width:1px;height:34.500px;background:#ececec"></div>
  <svg style="left:1365px;top:844px" width="16" height="14" viewBox="0 0 16 14"><circle cx="6.500" cy="4" r="3.200" fill="none" stroke="#1d8ab5" stroke-width="1.200"></circle><path d="M8.500 13H.8c0-3.500 2-5.800 5.700-5.800 1.300 0 2.400.300 3.200.900" fill="none" stroke="#1d8ab5" stroke-width="1.200"></path><path d="M10.500 9.500h5M10.500 11.500h5M10.500 13.500h5" stroke="#1d8ab5" stroke-width="1"></path></svg>
  <span class="t" style="color: rgb(29, 138, 181); font-size: 13px; left: 1385.5px; top: 844px; transform-origin: 0px 50%; transform: scaleX(0.898);">Participants</span>
  <svg style="left:1465px;top:844px" width="15" height="15" viewBox="0 0 15 15"><path d="M2.200 11.500A6.300 6.300 0 1 1 4.500 13.300L1 14z" fill="none" stroke="#1d8ab5" stroke-width="1.200" stroke-linejoin="round"></path></svg>
  <span class="t" style="color: rgb(29, 138, 181); font-size: 13px; left: 1486.5px; top: 844px; transform-origin: 0px 50%; transform: scaleX(0.91);">Chat</span>
</div>

<div class="a" style="left:1534.800px;top:0;width:1.200px;height:877px;background:#1a3f9e"></div>
<!-- viewing pill -->
<div id="viewing">
  <div class="a" style="left:487px;top:139.500px;width:168px;height:27.500px;border-radius:14px;background:#fff"></div>
  <span class="t" style="font-size: 11px; left: 500.5px; top: 148px; transform-origin: 0px 50%; transform: scaleX(0.969);">Viewing ΝΙΚΟΛΑΚΟΠΟΥΛΟ...</span>
</div>



</body></html>
